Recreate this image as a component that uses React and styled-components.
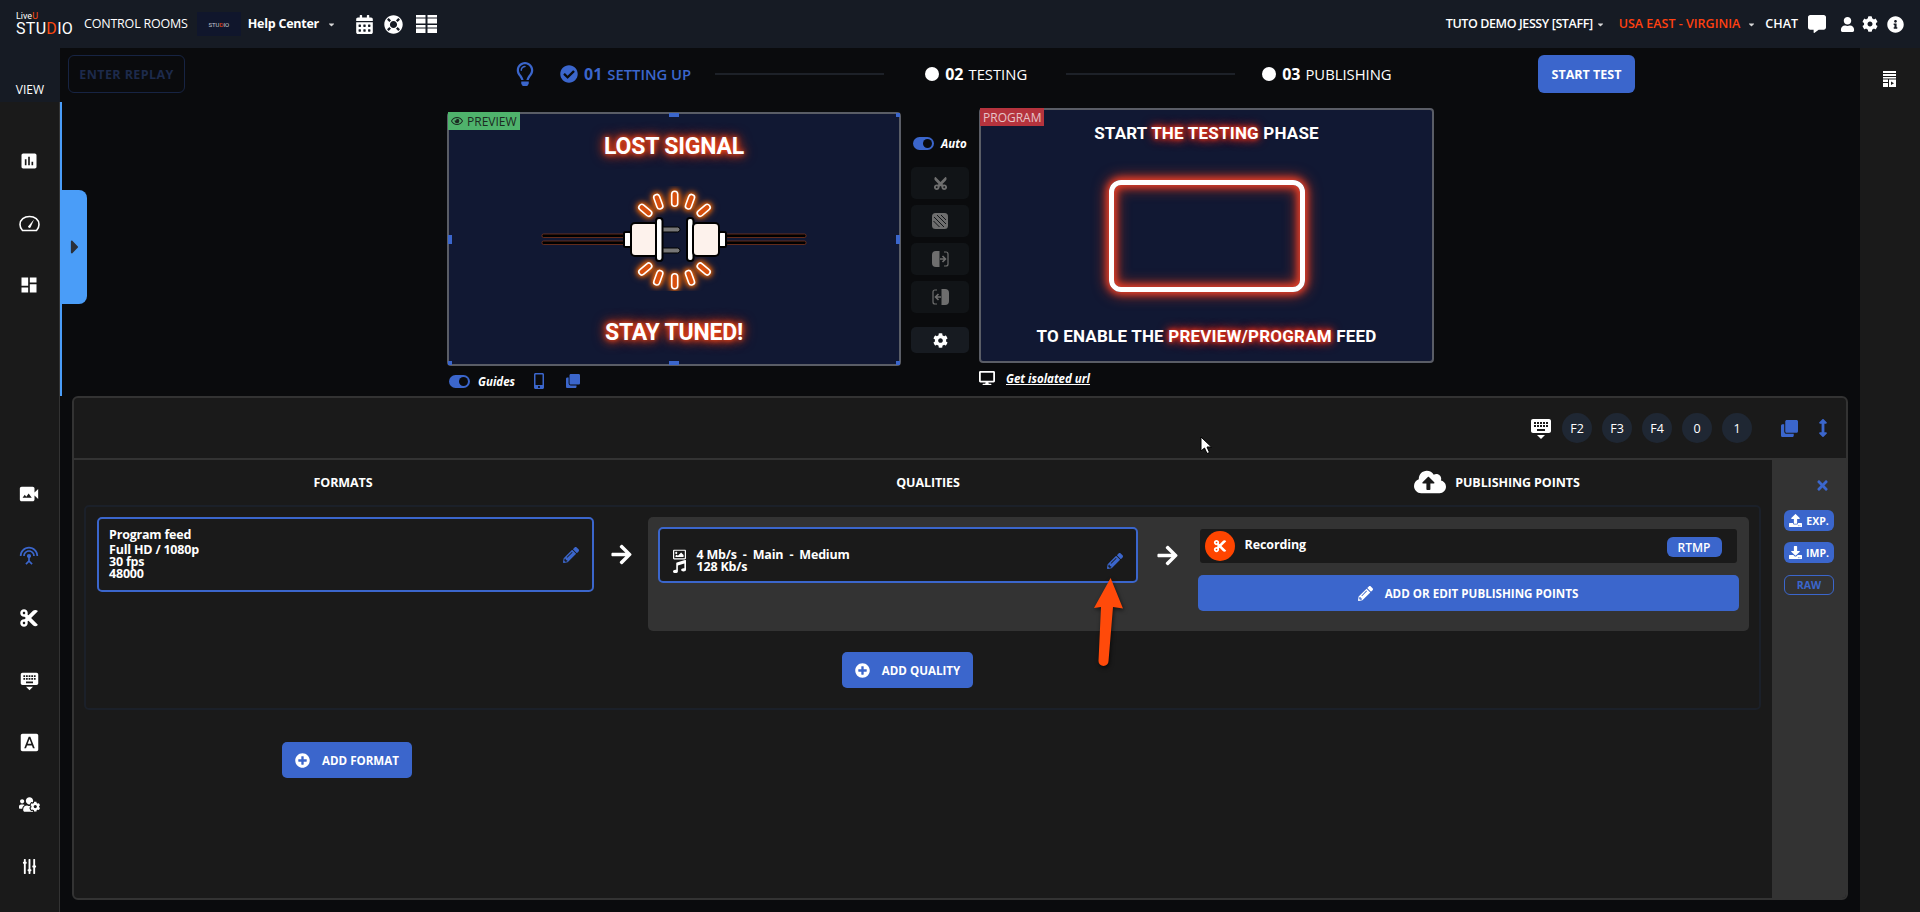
import React from 'react';
import styled, { createGlobalStyle } from 'styled-components';
import {
  FaCalendarAlt,
  FaLifeRing,
  FaCaretDown,
  FaCaretRight,
  FaCommentAlt,
  FaUser,
  FaCog,
  FaInfoCircle,
  FaCheckCircle,
  FaRegLightbulb,
  FaRegEye,
  FaMobileAlt,
  FaClone,
  FaDesktop,
  FaCut,
  FaUsersCog,
  FaSlidersH,
  FaArrowsAltV,
  FaPencilAlt,
  FaArrowRight,
  FaRegImage,
  FaMusic,
  FaPlusCircle,
  FaCloudUploadAlt,
  FaTimes,
  FaUpload,
  FaDownload,
} from 'react-icons/fa';
import {
  MdInsertChart,
  MdDashboard,
  MdVideoCameraBack,
  MdSettingsInputAntenna,
  MdKeyboardHide,
  MdFontDownload,
} from 'react-icons/md';

const blue = '#3b66cc';

const GlobalStyle = createGlobalStyle`
  html, body {
    margin: 0;
    padding: 0;
    background: #0a0b0d;
  }
  body {
    font-family: "Open Sans", "Noto Sans", sans-serif;
    color: white;
  }
  * {
    box-sizing: border-box;
  }
`;

const Page = styled.div`
  width: 1920px;
  height: 912px;
  display: flex;
  flex-direction: column;
  overflow: hidden;
  background: #0a0b0d;
`;

/* top bar */
const Header = styled.header`
  height: 48px;
  flex: none;
  display: flex;
  align-items: center;
  background: #161b24;
  padding-left: 16px;
  padding-right: 16px;
`;

const Logo = styled.div`
  width: 52px;
  display: flex;
  flex-direction: column;
  font-family: "Roboto", sans-serif;
  line-height: 1;
  .live {
    font-size: 9px;
    font-weight: 400;
    height: 9px;
    span {
      color: #ff4a12;
    }
  }
  .studio {
    font-size: 16px;
    font-weight: 400;
    letter-spacing: 0.3px;
    span {
      color: #ff4a12;
    }
  }
`;

const HeadText = styled.span`
  margin-left: ${(p) => p.$ml || 0}px;
  font-size: 12.5px;
  font-weight: ${(p) => p.$weight || 600};
  letter-spacing: ${(p) => p.$track || 0}px;
  color: ${(p) => p.$color || 'white'};
  white-space: nowrap;
  line-height: 1;
`;

const Thumb = styled.div`
  width: 44px;
  height: 24px;
  margin-left: 9px;
  background: #10162c;
  display: flex;
  align-items: center;
  justify-content: center;
  font-family: "Roboto", sans-serif;
  font-size: 6px;
  color: #c8cbd4;
  span {
    color: #ff4a12;
  }
`;

const Caret = styled(FaCaretDown)`
  margin-left: ${(p) => p.$ml || 0}px;
  font-size: 9px;
  color: #d8d8d8;
`;

const HeadIcon = styled.span`
  display: flex;
  margin-left: ${(p) => p.$ml || 0}px;
  font-size: ${(p) => p.$size || 18}px;
  color: white;
`;

const Spacer = styled.div`
  flex: 1;
`;

/* body */
const Body = styled.div`
  flex: 1;
  display: flex;
  min-height: 0;
`;

const Sidebar = styled.nav`
  width: 60px;
  flex: none;
  background: #1a1a1a;
  border-right: 1px solid #333;
  display: flex;
  flex-direction: column;
`;

const ViewItem = styled.div`
  height: 54px;
  background: #161b24;
  display: flex;
  align-items: center;
  justify-content: center;
  font-size: 12px;
  font-weight: 400;
  padding-top: 28px;
  margin-right: -1px;
`;

const NavGroup = styled.div`
  display: flex;
  flex-direction: column;
  margin-top: ${(p) => p.$top}px;
`;

const NavItem = styled.div`
  height: ${(p) => p.$h}px;
  display: flex;
  align-items: center;
  justify-content: center;
  font-size: ${(p) => p.$size || 20}px;
  color: ${(p) => (p.$active ? blue : 'white')};
  padding-right: 1px;
`;

const Tilted = styled(FaSlidersH)`
  transform: rotate(90deg);
`;

const Main = styled.main`
  width: 1800px;
  flex: none;
  display: flex;
  flex-direction: column;
`;

const RightBar = styled.aside`
  width: 60px;
  flex: none;
  background: #1a1a1a;
  display: flex;
  justify-content: center;
  padding-top: 23px;
  padding-right: 1px;
`;

/* toolbar with the steps */
const Toolbar = styled.div`
  height: 54px;
  flex: none;
  display: flex;
  align-items: flex-start;
  padding-top: 7px;
  padding-left: 8px;
`;

const ReplayButton = styled.button`
  width: 117px;
  height: 38px;
  background: transparent;
  border: 1px solid #172443;
  border-radius: 6px;
  color: #1d2a4b;
  font-family: inherit;
  font-size: 12.5px;
  font-weight: 700;
  letter-spacing: 0.4px;
  padding: 0;
`;

const Steps = styled.div`
  height: 38px;
  display: flex;
  align-items: center;
  margin-left: 331px;
  width: 1022px;
`;

const Bulb = styled(FaRegLightbulb)`
  color: ${blue};
  font-size: 24px;
  flex: none;
  width: 18px;
  margin-right: 26px;
`;

const Dot = styled.span`
  width: 14px;
  height: 14px;
  border-radius: 50%;
  background: white;
  flex: none;
`;

const StepNumber = styled.span`
  margin-left: 6px;
  font-size: 16px;
  font-weight: 700;
  color: ${(p) => (p.$active ? blue : 'white')};
`;

const StepLabel = styled.span`
  margin-left: 5px;
  font-size: 14.8px;
  font-weight: ${(p) => (p.$active ? 600 : 400)};
  color: ${(p) => (p.$active ? blue : 'white')};
  white-space: nowrap;
`;

const StepCheck = styled(FaCheckCircle)`
  color: ${blue};
  font-size: 18px;
  flex: none;
`;

const StepLine = styled.div`
  width: 169px;
  height: 2px;
  flex: none;
  margin: 0 ${(p) => p.$after}px 0 ${(p) => p.$before}px;
  background: #1d2128;
`;

const StartButton = styled.button`
  width: 97px;
  height: 38px;
  margin-left: ${(p) => p.$ml}px;
  background: ${blue};
  border: none;
  border-radius: 6px;
  color: white;
  font-family: inherit;
  font-size: 12.5px;
  font-weight: 700;
  padding: 0;
`;

/* monitors */
const Monitors = styled.div`
  position: relative;
  height: 294px;
  flex: none;
  display: flex;
  align-items: flex-start;
  border-left: 2px solid #4a9df8;
  padding-left: 385px;
`;

const Drawer = styled.div`
  position: absolute;
  left: 0;
  top: 88px;
  width: 25px;
  height: 114px;
  background: #4a9df8;
  border-radius: 0 8px 8px 0;
  display: flex;
  align-items: center;
  justify-content: center;
  color: #2a2f38;
  font-size: 22px;
`;

const MonitorColumn = styled.div`
  display: flex;
  flex-direction: column;
  margin-top: ${(p) => p.$top}px;
`;

const Monitor = styled.div`
  position: relative;
  width: ${(p) => p.$w}px;
  height: ${(p) => p.$h}px;
  background: #111833;
  border: 2px solid #5a5d66;
  border-radius: 4px;
  display: flex;
  flex-direction: column;
  align-items: center;
`;

const MonitorTag = styled.div`
  position: absolute;
  top: -2px;
  left: -1px;
  height: 18px;
  padding: 0 3px;
  display: flex;
  align-items: center;
  gap: 4px;
  font-size: 12px;
  background: ${(p) => p.$bg};
  color: ${(p) => p.$color};
`;

const Handle = styled.span`
  position: absolute;
  background: ${blue};
  ${(p) => p.$place};
`;

const NeonTitle = styled.div`
  font-family: "Roboto", sans-serif;
  font-weight: 700;
  font-size: 23px;
  line-height: 20px;
  letter-spacing: -0.2px;
  color: #fff;
  white-space: nowrap;
  margin-top: ${(p) => p.$top}px;
  text-shadow: 0 0 5px #ff4d1c, 0 0 10px #ff4010, 0 0 14px #ff3a00;
`;

const PlugArt = styled.svg`
  display: block;
  width: 268px;
  height: 105px;
  margin-top: 29px;
  flex: none;
  .ray {
    fill: #d8500e;
    stroke: #fff;
    stroke-width: 1.6;
  }
  .rays {
    filter: drop-shadow(0 0 2.5px #ff6a00) drop-shadow(0 0 3px #ff6a00);
  }
  .part {
    fill: #fff;
    stroke: #000;
    stroke-width: 2;
  }
  .body {
    fill: #fdf2ec;
    stroke: #000;
    stroke-width: 2;
  }
  .pin {
    fill: #777;
    stroke: #000;
    stroke-width: 1;
  }
  .wire {
    fill: #000;
    stroke: #8a3a1c;
    stroke-width: 0.7;
  }
`;

const ProgramLine = styled.div`
  font-family: "Roboto", sans-serif;
  font-weight: 700;
  font-size: 17px;
  line-height: 20px;
  letter-spacing: 0.2px;
  white-space: nowrap;
  margin-top: ${(p) => p.$top}px;
  color: white;
  span {
    text-shadow: 0 0 4px #ff3c1c, 0 0 8px #ff2c10, 0 0 12px #e8261a;
  }
`;

const NeonFrame = styled.div`
  width: 196px;
  height: 112px;
  flex: none;
  margin-top: 37px;
  border: 5px solid white;
  border-radius: 12px;
  box-shadow: 0 0 7px 2px #e8402a, 0 0 14px 3px #a8301f, inset 0 0 7px 2px #e8402a,
    inset 0 0 14px 3px #a8301f;
`;

const UnderRow = styled.div`
  height: 30px;
  display: flex;
  align-items: center;
  font-size: 11.5px;
`;

const Toggle = styled.span`
  position: relative;
  width: 21px;
  height: 13px;
  flex: none;
  display: inline-block;
  margin-left: ${(p) => p.$ml || 0}px;
  border-radius: 7px;
  background: ${blue};
  &::after {
    content: '';
    position: absolute;
    right: 2px;
    top: 2px;
    width: 9px;
    height: 9px;
    border-radius: 50%;
    background: #0a0b0d;
  }
`;

const ItalicNote = styled.span`
  margin-left: ${(p) => p.$ml || 0}px;
  font-size: 11.5px;
  font-weight: 700;
  font-style: italic;
  color: white;
  text-decoration: ${(p) => (p.$link ? 'underline' : 'none')};
`;

const BlueIcon = styled.span`
  display: flex;
  margin-left: ${(p) => p.$ml || 0}px;
  color: ${blue};
  font-size: ${(p) => p.$size || 14}px;
`;

const Switcher = styled.div`
  width: 58px;
  margin: 0 10px;
  flex: none;
  display: flex;
  flex-direction: column;
  padding-top: 31px;
`;

const AutoRow = styled.div`
  height: 20px;
  display: flex;
  align-items: center;
  margin-bottom: 14px;
  margin-left: 2px;
  ${ItalicNote} {
    white-space: nowrap;
  }
`;

const SwitchButton = styled.div`
  height: ${(p) => p.$h || 32}px;
  margin-bottom: 6px;
  margin-top: ${(p) => p.$top || 0}px;
  display: flex;
  align-items: center;
  justify-content: center;
  border-radius: 5px;
  background: ${(p) => (p.$on ? '#171b21' : '#111417')};
  color: ${(p) => (p.$on ? 'white' : '#6e6e6e')};
  font-size: 15px;
`;

const UpCut = styled(FaCut)`
  transform: rotate(-90deg);
`;

/* lower panel */
const Panel = styled.section`
  position: relative;
  margin-left: 12px;
  width: 1776px;
  height: 504px;
  flex: none;
  display: flex;
  flex-direction: column;
  background: #1a1a1a;
  border: 2px solid #333;
  border-radius: 6px;
`;

const PanelHead = styled.div`
  height: 62px;
  flex: none;
  display: flex;
  align-items: center;
  justify-content: flex-end;
  padding-right: 14px;
  border-bottom: 2px solid #333;
`;

const KeyCircle = styled.span`
  width: 30px;
  height: 30px;
  flex: none;
  margin-left: ${(p) => p.$ml || 10}px;
  border-radius: 50%;
  background: #1f2733;
  display: flex;
  align-items: center;
  justify-content: center;
  font-size: 12.5px;
  font-weight: 500;
`;

const PanelBody = styled.div`
  flex: 1;
  display: flex;
  min-height: 0;
`;

const Editor = styled.div`
  width: 1698px;
  flex: none;
`;

const Columns = styled.div`
  height: 45px;
  display: grid;
  grid-template-columns: 538px 632px 506px;
  align-items: center;
`;

const ColumnTitle = styled.div`
  display: flex;
  align-items: center;
  justify-content: center;
  gap: 9px;
  font-size: 12.5px;
  font-weight: 700;
  letter-spacing: -0.1px;
  padding-bottom: 1px;
  svg {
    font-size: 32px;
  }
`;

const FlowBox = styled.div`
  width: 1677px;
  height: 205px;
  margin-left: 10px;
  border: 2px solid #1b2029;
  border-radius: 5px;
  padding: 10px 11px;
`;

const FlowRow = styled.div`
  display: flex;
  align-items: flex-start;
`;

const FormatCard = styled.div`
  position: relative;
  width: 497px;
  height: 75px;
  flex: none;
  border: 2px solid ${blue};
  border-radius: 5px;
  padding: 9px 10px;
  font-size: 12.5px;
  font-weight: 700;
  letter-spacing: -0.2px;
  line-height: 12px;
  display: flex;
  align-items: center;
  justify-content: space-between;
`;

const FormatLines = styled.div`
  display: flex;
  flex-direction: column;
  span:first-child {
    margin-bottom: 3px;
  }
`;

const EditPencil = styled(FaPencilAlt)`
  color: ${blue};
  font-size: 16px;
  margin-right: ${(p) => p.$mr || 3}px;
  margin-top: ${(p) => p.$top || 0}px;
`;

const FlowArrow = styled.div`
  width: ${(p) => p.$w}px;
  height: ${(p) => p.$h}px;
  flex: none;
  display: flex;
  align-items: center;
  justify-content: center;
  font-size: 23px;
  color: white;
  padding-left: ${(p) => p.$pad || 0}px;
`;

const QualityWrap = styled.div`
  width: 1101px;
  flex: none;
`;

const QualityGroup = styled.div`
  height: 114px;
  display: flex;
  align-items: flex-start;
  background: #333;
  border-radius: 5px;
  padding: 10px 10px 10px 9.5px;
`;

const QualityCard = styled.div`
  width: 480px;
  height: 56px;
  flex: none;
  background: #1a1a1a;
  border: 2px solid ${blue};
  border-radius: 5px;
  padding: 0 4px 0 13px;
  display: flex;
  align-items: center;
  justify-content: space-between;
`;

const QualityLines = styled.div`
  display: flex;
  flex-direction: column;
  padding-top: 10px;
`;

const QualityLine = styled.div`
  display: flex;
  align-items: center;
  height: 12px;
  font-size: 12.5px;
  font-weight: 700;
  letter-spacing: -0.2px;
  white-space: pre;
  svg {
    width: 13px;
    margin-right: 11px;
    font-size: 13px;
  }
`;

const PointsColumn = styled.div`
  width: 541px;
  flex: none;
  display: flex;
  flex-direction: column;
  padding-top: 2px;
  gap: 12px;
`;

const RecordingRow = styled.div`
  height: 34px;
  margin: 0 2px;
  background: #1a1a1a;
  border-radius: 3px;
  display: flex;
  align-items: center;
  padding: 0 15px 0 5px;
  font-size: 12.5px;
  font-weight: 700;
`;

const RecordLabel = styled.span`
  margin-bottom: 4px;
  letter-spacing: -0.1px;
`;

const RecordDot = styled.span`
  width: 30px;
  height: 30px;
  flex: none;
  border-radius: 50%;
  background: #ff4500;
  display: flex;
  align-items: center;
  justify-content: center;
  font-size: 14px;
  margin-right: 10px;
`;

const TypeBadge = styled.span`
  width: 55px;
  height: 20px;
  margin-left: auto;
  margin-top: 2px;
  background: ${blue};
  border-radius: 6px;
  display: flex;
  align-items: center;
  justify-content: center;
  font-size: 12px;
  font-weight: 600;
`;

const BlueButton = styled.button`
  height: 36px;
  width: ${(p) => p.$w || 'auto'};
  background: ${blue};
  border: none;
  border-radius: 5px;
  color: white;
  font-family: inherit;
  font-size: 11.6px;
  font-weight: 700;
  display: flex;
  align-items: center;
  justify-content: center;
  gap: ${(p) => p.$gap || 12}px;
  padding: 0;
  margin-left: ${(p) => p.$ml || 0}px;
  margin-top: ${(p) => p.$top || 0}px;
  svg {
    font-size: 15px;
  }
`;

const StripBar = styled.div`
  width: 74px;
  flex: none;
  background: #333;
  padding: 18px 0 0 12px;
  display: flex;
  flex-direction: column;
  border-radius: 0 0 4px 0;
`;

const StripClose = styled(FaTimes)`
  color: ${blue};
  font-size: 15px;
  margin-left: 31px;
  margin-bottom: 17px;
`;

const StripButton = styled.div`
  width: 50px;
  height: ${(p) => p.$h || 21}px;
  margin-bottom: ${(p) => p.$gap || 11}px;
  border-radius: 6px;
  background: ${(p) => (p.$outline ? 'transparent' : blue)};
  border: ${(p) => (p.$outline ? `1px solid ${blue}` : 'none')};
  color: ${(p) => (p.$outline ? blue : 'white')};
  display: flex;
  align-items: center;
  justify-content: center;
  gap: 4px;
  font-size: 10.5px;
  font-weight: 700;
  svg {
    font-size: 13px;
  }
`;

const MousePointer = styled.svg`
  position: absolute;
  left: 1126px;
  top: 38px;
  width: 12px;
  height: 18px;
`;

const Annotation = styled.svg`
  position: absolute;
  left: 1011px;
  top: 172px;
  width: 45px;
  height: 105px;
  filter: drop-shadow(1px 2px 2px rgba(0, 0, 0, 0.6));
`;

const GaugeIcon = () => (
  <svg width="21" height="17" viewBox="0 0 21 17" fill="none">
    <path
      d="M3.5 15.5h14c1.5-1.5 2.5-3.5 2.5-6C20 4.8 15.8 1.5 10.5 1.5S1 4.8 1 9.5c0 2.5 1 4.5 2.5 6z"
      stroke="white"
      strokeWidth="1.6"
    />
    <path d="M9 11.5L15 4.5 11.5 12.5a1.5 1.5 0 0 1-2.5-1z" fill="white" />
  </svg>
);

const GridIcon = () => (
  <svg width="21" height="18" viewBox="0 0 21 18" fill="white">
    <rect x="0" y="0" width="9.5" height="2.5" />
    <rect x="0" y="3.5" width="9.5" height="5" />
    <rect x="0" y="10" width="9.5" height="2.5" />
    <rect x="0" y="13.5" width="9.5" height="4.5" />
    <rect x="11.5" y="0" width="9.5" height="2.5" />
    <rect x="11.5" y="3.5" width="9.5" height="5" />
    <rect x="11.5" y="10" width="9.5" height="2.5" />
    <rect x="11.5" y="13.5" width="9.5" height="4.5" />
  </svg>
);

const PlaylistIcon = () => (
  <svg width="13" height="16" viewBox="0 0 13 16" fill="white">
    <rect x="0" y="0" width="13" height="2" />
    <rect x="0" y="3" width="13" height="2" />
    <rect x="0" y="6" width="13" height="1.5" />
    <path d="M0 8.5h5v7.5H0zM6 8.5h7v7.5H6z" />
    <path d="M8 10.5l3 1.8-3 1.8z" fill="#1a1a1a" />
    <rect x="0" y="11" width="5" height="1" fill="#1a1a1a" />
  </svg>
);

const StripesIcon = () => (
  <svg width="16" height="16" viewBox="0 0 16 16">
    <rect width="16" height="16" rx="3.5" fill="#6e6e6e" />
    <path
      d="M2 4l10 10M5 2l9 9M1.5 8l6 6M9 2l5 5"
      stroke="#111417"
      strokeWidth="1"
      fill="none"
    />
  </svg>
);

const SlideInIcon = ({ flip }) => (
  <svg
    width="17"
    height="16"
    viewBox="0 0 17 16"
    style={{ transform: flip ? 'scaleX(-1)' : 'none' }}
    fill="none"
  >
    <path d="M4 0h3.5v16H4a4 4 0 0 1-4-4V4a4 4 0 0 1 4-4z" fill="#6e6e6e" />
    <path d="M12 1h2a2 2 0 0 1 2 2v10a2 2 0 0 1-2 2h-2" stroke="#6e6e6e" strokeWidth="1.2" />
    <path d="M8 8h5M10.5 5l3 3-3 3" stroke="#6e6e6e" strokeWidth="1.6" />
  </svg>
);

const rays = [
  [134.7, 12.7, 0],
  [118.3, 15.7, -20],
  [150, 15.7, 20],
  [105.3, 24.3, -50],
  [163.7, 24.3, 50],
  [134.7, 95.3, 0],
  [118.3, 91.7, 20],
  [150, 91.7, -20],
  [105.3, 83, 50],
  [163.7, 83, -50],
];

const UnpluggedArt = () => (
  <PlugArt viewBox="0 0 268 105">
    <g className="rays">
      {rays.map(([x, y, angle]) => (
        <rect
          key={`${x}-${y}`}
          className="ray"
          x={x - 3}
          y={y - 7.5}
          width="6"
          height="15"
          rx="3"
          transform={`rotate(${angle} ${x} ${y})`}
        />
      ))}
    </g>
    <rect className="wire" x="2" y="48" width="84" height="3.5" rx="1.5" />
    <rect className="wire" x="2" y="55" width="84" height="3.5" rx="1.5" />
    <rect className="wire" x="186" y="48" width="80" height="3.5" rx="1.5" />
    <rect className="wire" x="186" y="55" width="80" height="3.5" rx="1.5" />
    <rect className="part" x="84" y="46" width="7" height="15" rx="1.5" />
    <rect className="body" x="91" y="37" width="27" height="33" rx="4" />
    <rect className="pin" x="121" y="41" width="19" height="5" rx="2.5" />
    <rect className="pin" x="121" y="62" width="19" height="5" rx="2.5" />
    <rect className="part" x="116" y="32" width="6.5" height="43" rx="3" />
    <rect className="part" x="147" y="32" width="6.5" height="43" rx="3" />
    <rect className="body" x="153" y="37" width="26" height="33" rx="4" />
    <rect className="part" x="179" y="46" width="7" height="15" rx="1.5" />
  </PlugArt>
);

const previewHandles = [
  'left: 220px; top: -1px; width: 10px; height: 4px',
  'left: 220px; bottom: -1px; width: 10px; height: 4px',
  'left: -1px; top: 121px; width: 4px; height: 9px',
  'right: -1px; top: 121px; width: 4px; height: 9px',
  'right: -1px; top: -1px; width: 4px; height: 4px',
  'right: -1px; bottom: -1px; width: 4px; height: 4px',
  'left: -1px; bottom: -1px; width: 4px; height: 4px',
];

const App = () => {
  return (
    <Page>
      <GlobalStyle />
      <Header>
        <Logo>
          <div className="live">
            Live<span>U</span>
          </div>
          <div className="studio">
            STU<span>D</span>IO
          </div>
        </Logo>
        <HeadText $ml={16} $weight={400} $track={-0.2}>
          CONTROL ROOMS
        </HeadText>
        <Thumb>
          STU<span>D</span>IO
        </Thumb>
        <HeadText $ml={7} $weight={700} $track={-0.25}>
          Help Center
        </HeadText>
        <Caret $ml={8} />
        <HeadIcon $ml={19} $size={19}>
          <FaCalendarAlt />
        </HeadIcon>
        <HeadIcon $ml={10} $size={19}>
          <FaLifeRing />
        </HeadIcon>
        <HeadIcon $ml={13}>
          <GridIcon />
        </HeadIcon>
        <Spacer />
        <HeadText $track={-0.4}>TUTO DEMO JESSY [STAFF]</HeadText>
        <Caret $ml={3} />
        <HeadText $color="#ff4010" $ml={14}>
          USA EAST - VIRGINIA
        </HeadText>
        <Caret $ml={7} />
        <HeadText $ml={9}>CHAT</HeadText>
        <HeadIcon $ml={10}>
          <FaCommentAlt />
        </HeadIcon>
        <HeadIcon $ml={14} $size={15}>
          <FaUser />
        </HeadIcon>
        <HeadIcon $ml={7} $size={16}>
          <FaCog />
        </HeadIcon>
        <HeadIcon $ml={9} $size={17}>
          <FaInfoCircle />
        </HeadIcon>
      </Header>

      <Body>
        <Sidebar>
          <ViewItem>VIEW</ViewItem>
          <NavGroup $top={28}>
            <NavItem $h={62}>
              <MdInsertChart />
            </NavItem>
            <NavItem $h={62}>
              <GaugeIcon />
            </NavItem>
            <NavItem $h={62}>
              <MdDashboard />
            </NavItem>
          </NavGroup>
          <NavGroup $top={147}>
            <NavItem $h={62} $size={22}>
              <MdVideoCameraBack />
            </NavItem>
            <NavItem $h={62} $active>
              <MdSettingsInputAntenna />
            </NavItem>
            <NavItem $h={62}>
              <FaCut />
            </NavItem>
            <NavItem $h={62} $size={21}>
              <MdKeyboardHide />
            </NavItem>
            <NavItem $h={62} $size={21}>
              <MdFontDownload />
            </NavItem>
            <NavItem $h={62} $size={21}>
              <FaUsersCog />
            </NavItem>
            <NavItem $h={62} $size={15}>
              <Tilted />
            </NavItem>
          </NavGroup>
        </Sidebar>

        <Main>
          <Toolbar>
            <ReplayButton>ENTER REPLAY</ReplayButton>
            <Steps>
              <Bulb />
              <StepCheck />
              <StepNumber $active>01</StepNumber>
              <StepLabel $active>SETTING UP</StepLabel>
              <StepLine $before={24} $after={41} />
              <Dot />
              <StepNumber>02</StepNumber>
              <StepLabel>TESTING</StepLabel>
              <StepLine $before={39} $after={27} />
              <Dot />
              <StepNumber>03</StepNumber>
              <StepLabel>PUBLISHING</StepLabel>
            </Steps>
            <StartButton $ml={0}>START TEST</StartButton>
          </Toolbar>

          <Monitors>
            <Drawer>
              <FaCaretRight />
            </Drawer>
            <MonitorColumn $top={10}>
              <Monitor $w={454} $h={254}>
                <MonitorTag $bg="#4fb36c" $color="#1c2a22">
                  <FaRegEye />
                  PREVIEW
                </MonitorTag>
                {previewHandles.map((place) => (
                  <Handle key={place} $place={place} />
                ))}
                <NeonTitle $top={23}>LOST SIGNAL</NeonTitle>
                <UnpluggedArt />
                <NeonTitle $top={32}>STAY TUNED!</NeonTitle>
              </Monitor>
              <UnderRow>
                <Toggle $ml={2} />
                <ItalicNote $ml={8}>Guides</ItalicNote>
                <BlueIcon $ml={16} $size={16}>
                  <FaMobileAlt />
                </BlueIcon>
                <BlueIcon $ml={19}>
                  <FaClone />
                </BlueIcon>
              </UnderRow>
            </MonitorColumn>

            <Switcher>
              <AutoRow>
                <Toggle />
                <ItalicNote $ml={7}>Auto</ItalicNote>
              </AutoRow>
              <SwitchButton>
                <UpCut />
              </SwitchButton>
              <SwitchButton>
                <StripesIcon />
              </SwitchButton>
              <SwitchButton>
                <SlideInIcon />
              </SwitchButton>
              <SwitchButton>
                <SlideInIcon flip />
              </SwitchButton>
              <SwitchButton $on $h={26} $top={8}>
                <FaCog />
              </SwitchButton>
            </Switcher>

            <MonitorColumn $top={6}>
              <Monitor $w={455} $h={255}>
                <MonitorTag $bg="#b5333d" $color="#e6c4c8">
                  PROGRAM
                </MonitorTag>
                <ProgramLine $top={13}>
                  START <span>THE TESTING</span> PHASE
                </ProgramLine>
                <NeonFrame />
                <ProgramLine $top={34}>
                  TO ENABLE THE <span>PREVIEW/PROGRAM</span> FEED
                </ProgramLine>
              </Monitor>
              <UnderRow>
                <HeadIcon $size={16}>
                  <FaDesktop />
                </HeadIcon>
                <ItalicNote $ml={11} $link>
                  Get isolated url
                </ItalicNote>
              </UnderRow>
            </MonitorColumn>
          </Monitors>

          <Panel>
            <PanelHead>
              <HeadIcon $size={24}>
                <MdKeyboardHide />
              </HeadIcon>
              <KeyCircle $ml={9}>F2</KeyCircle>
              <KeyCircle>F3</KeyCircle>
              <KeyCircle>F4</KeyCircle>
              <KeyCircle>0</KeyCircle>
              <KeyCircle>1</KeyCircle>
              <BlueIcon $ml={29} $size={17}>
                <FaClone />
              </BlueIcon>
              <BlueIcon $ml={16} $size={18}>
                <FaArrowsAltV />
              </BlueIcon>
            </PanelHead>

            <PanelBody>
              <Editor>
                <Columns>
                  <ColumnTitle>FORMATS</ColumnTitle>
                  <ColumnTitle>QUALITIES</ColumnTitle>
                  <ColumnTitle>
                    <FaCloudUploadAlt />
                    PUBLISHING POINTS
                  </ColumnTitle>
                </Columns>

                <FlowBox>
                  <FlowRow>
                    <FormatCard>
                      <FormatLines>
                        <span>Program feed</span>
                        <span>Full HD / 1080p</span>
                        <span>30 fps</span>
                        <span>48000</span>
                      </FormatLines>
                      <EditPencil $top={1} />
                    </FormatCard>
                    <FlowArrow $w={54} $h={75}>
                      <FaArrowRight />
                    </FlowArrow>
                    <QualityWrap>
                      <QualityGroup>
                        <QualityCard>
                          <QualityLines>
                            <QualityLine>
                              <FaRegImage />
                              {'4 Mb/s  -  Main  -  Medium'}
                            </QualityLine>
                            <QualityLine>
                              <FaMusic />
                              128 Kb/s
                            </QualityLine>
                          </QualityLines>
                          <EditPencil $top={12} $mr={9} />
                        </QualityCard>
                        <FlowArrow $w={60} $h={56}>
                          <FaArrowRight />
                        </FlowArrow>
                        <PointsColumn>
                          <RecordingRow>
                            <RecordDot>
                              <FaCut />
                            </RecordDot>
                            <RecordLabel>Recording</RecordLabel>
                            <TypeBadge>RTMP</TypeBadge>
                          </RecordingRow>
                          <BlueButton>
                            <FaPencilAlt />
                            ADD OR EDIT PUBLISHING POINTS
                          </BlueButton>
                        </PointsColumn>
                      </QualityGroup>
                      <BlueButton $w="131px" $ml={194} $top={21}>
                        <FaPlusCircle />
                        ADD QUALITY
                      </BlueButton>
                    </QualityWrap>
                  </FlowRow>
                </FlowBox>

                <BlueButton $w="130px" $ml={208} $top={32}>
                  <FaPlusCircle />
                  ADD FORMAT
                </BlueButton>
              </Editor>

              <StripBar>
                <StripClose />
                <StripButton>
                  <FaUpload />
                  EXP.
                </StripButton>
                <StripButton $gap={12}>
                  <FaDownload />
                  IMP.
                </StripButton>
                <StripButton $outline $h={20}>
                  RAW
                </StripButton>
              </StripBar>
            </PanelBody>

            <MousePointer viewBox="0 0 12 18">
              <path
                d="M1 1v14l3.5-3 2.5 5.5 2.5-1L7 11h4.5z"
                fill="white"
                stroke="black"
                strokeWidth="1"
              />
            </MousePointer>
            <Annotation viewBox="0 0 45 105">
              <path
                d="M25.6 8L38 38.5 28 37 23.5 91a5 5 0 0 1-10 0L16 37 9 38z"
                fill="#ff4a0a"
              />
            </Annotation>
          </Panel>
        </Main>

        <RightBar>
          <PlaylistIcon />
        </RightBar>
      </Body>
    </Page>
  );
};

export default App;
